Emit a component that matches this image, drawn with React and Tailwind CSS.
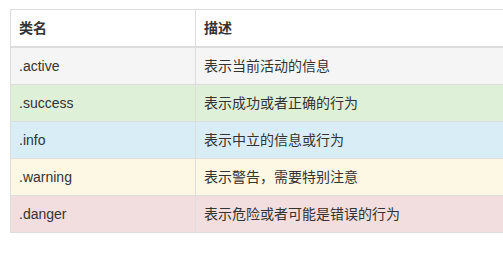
import React from "react"

const rows = [
  { cls: ".active", desc: "表示当前活动的信息", bg: "bg-[#f5f5f5]" },
  { cls: ".success", desc: "表示成功或者正确的行为", bg: "bg-[#dff0d8]" },
  { cls: ".info", desc: "表示中立的信息或行为", bg: "bg-[#d9edf7]" },
  { cls: ".warning", desc: "表示警告，需要特别注意", bg: "bg-[#fcf8e3]" },
  { cls: ".danger", desc: "表示危险或者可能是错误的行为", bg: "bg-[#f2dede]" },
]

const font = "font-['Liberation_Sans','Noto_Sans_CJK_SC',sans-serif]"

const App = () => {
  return (
    <div className={`w-[503px] h-[253px] overflow-hidden bg-white pt-[9px] pl-[10px] ${font}`}>
      <table className="w-[560px] border-collapse border border-[#ddd] text-[14px] leading-5 text-[#333]">
        <thead>
          <tr>
            <th className="w-[185px] border border-b-2 border-[#ddd] px-2 py-2 text-left font-bold">类名</th>
            <th className="border border-b-2 border-[#ddd] px-2 py-2 text-left font-bold">描述</th>
          </tr>
        </thead>
        <tbody>
          {rows.map((r) => (
            <tr key={r.cls} className={r.bg}>
              <td className="border border-[#ddd] px-2 py-2">{r.cls}</td>
              <td className="border border-[#ddd] px-2 py-2">{r.desc}</td>
            </tr>
          ))}
        </tbody>
      </table>
    </div>
  )
}

export default App
